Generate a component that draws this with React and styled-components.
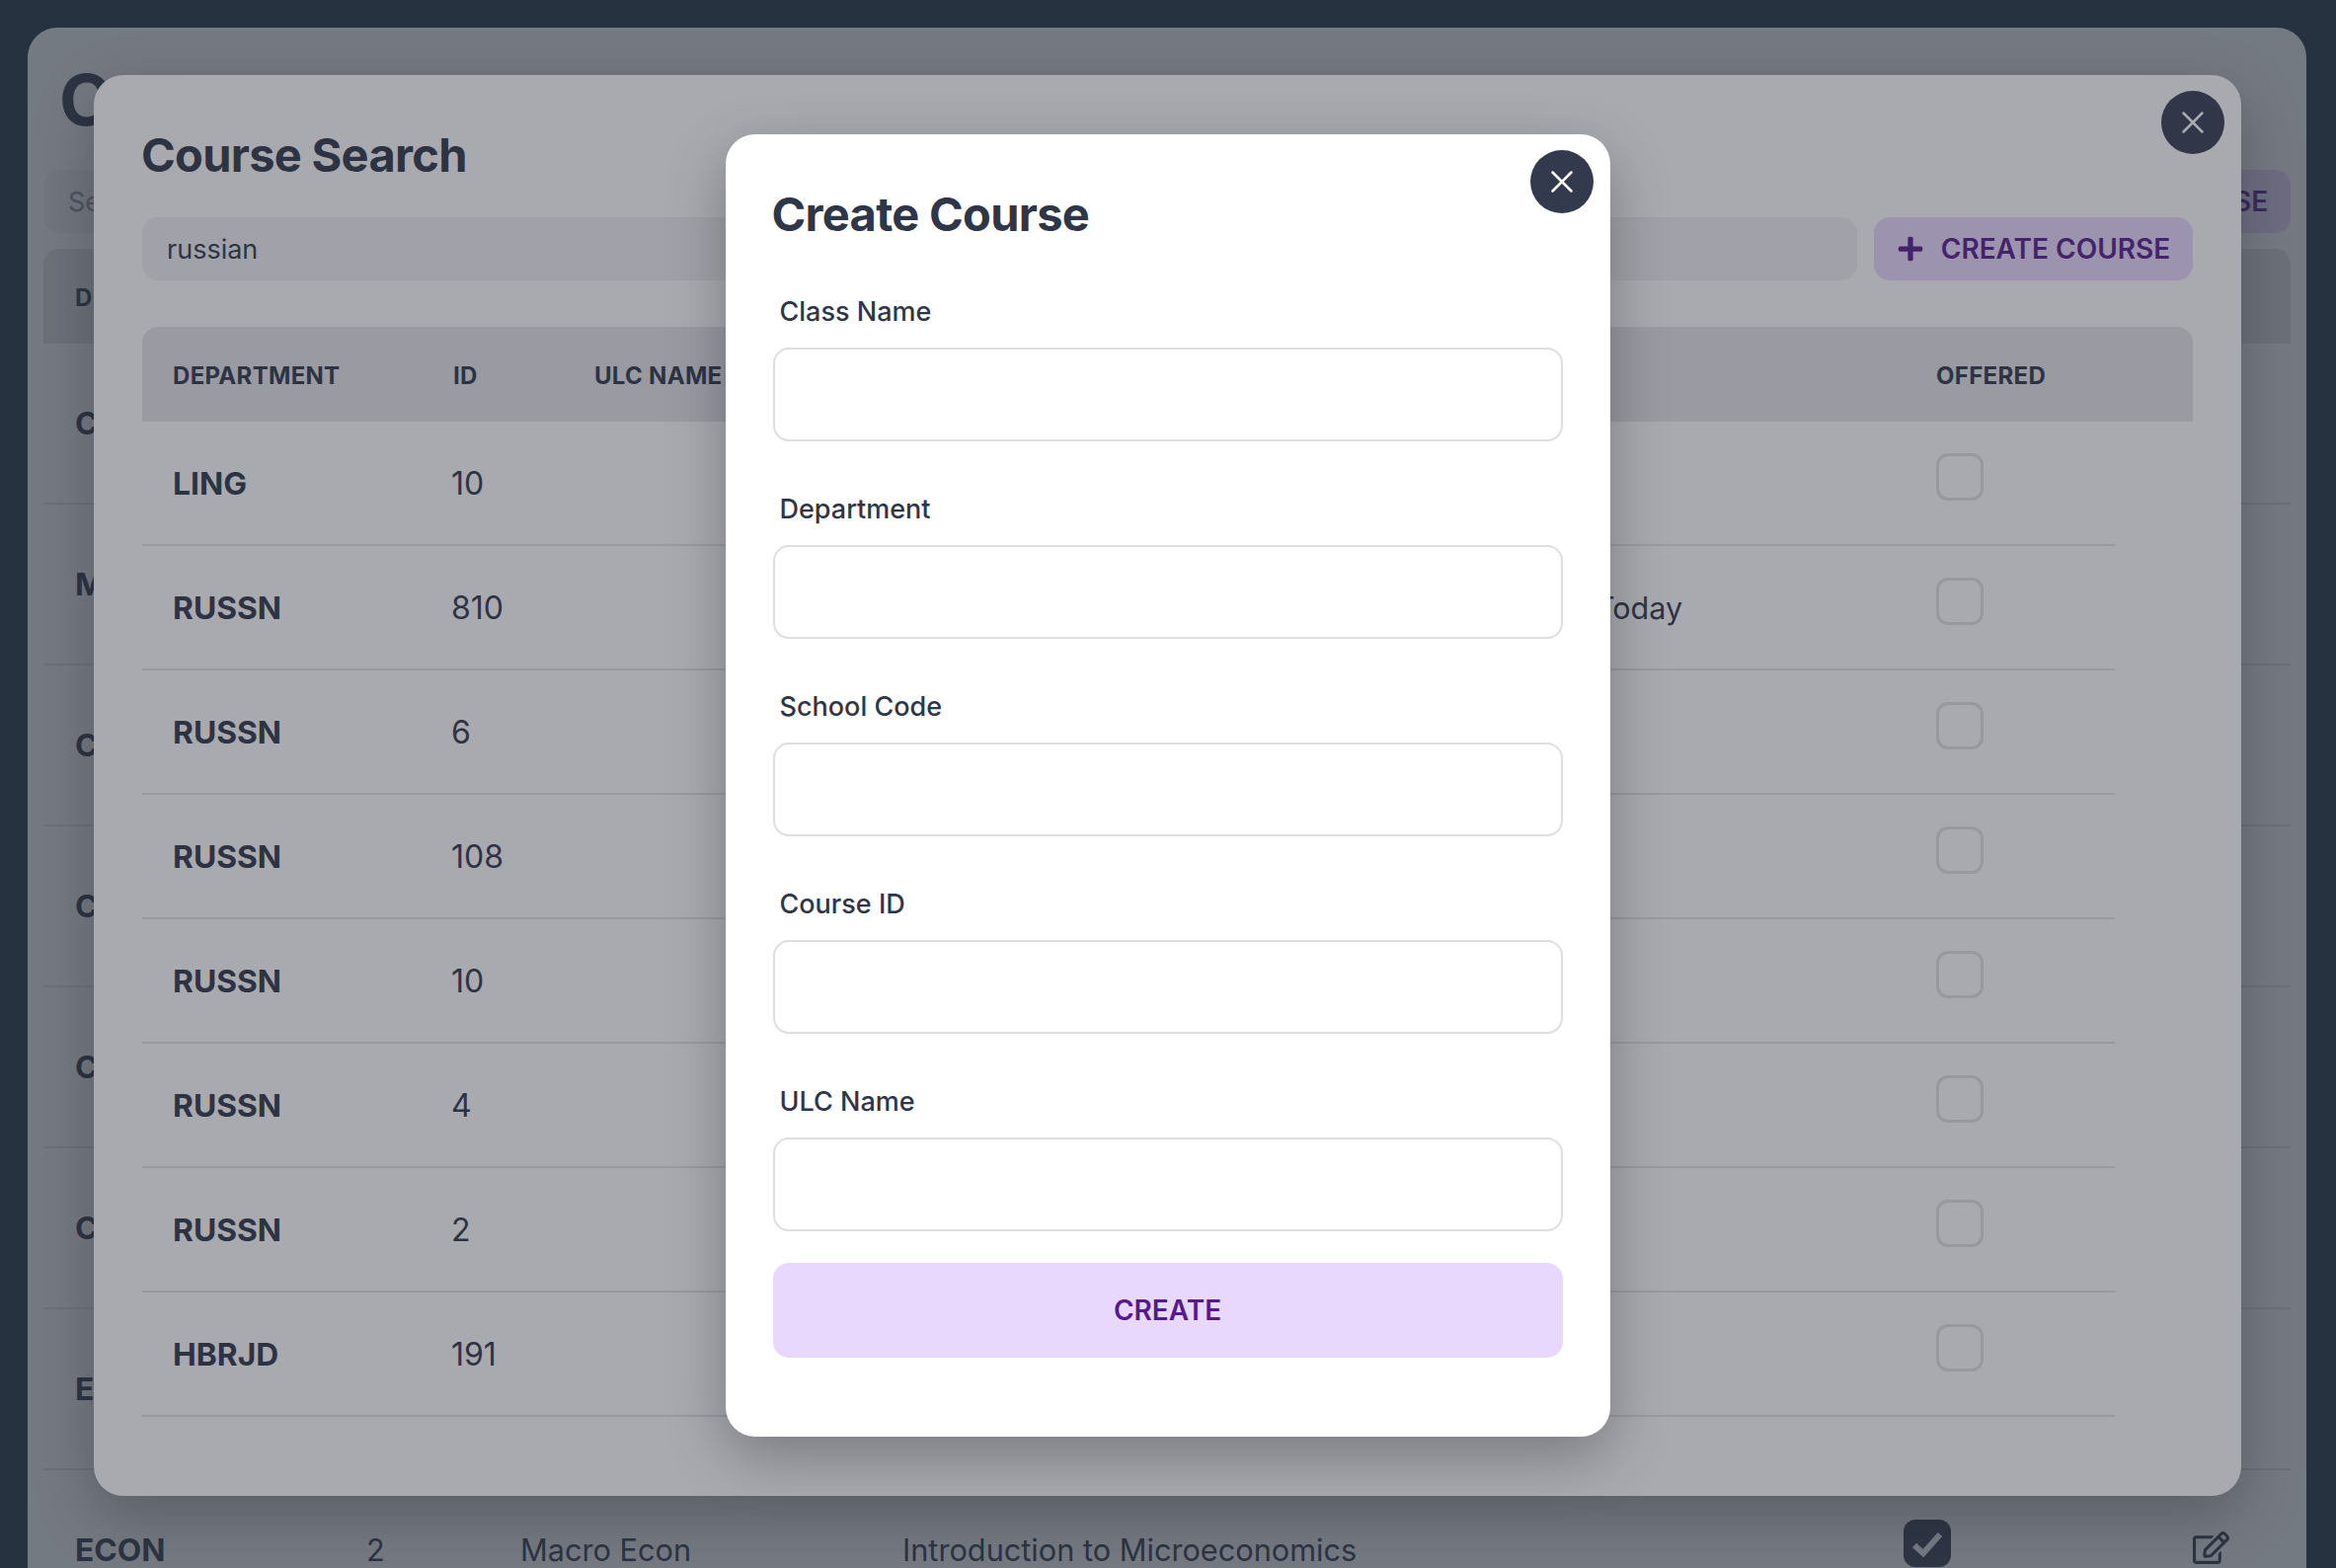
import styled, { createGlobalStyle } from 'styled-components'
import { X } from 'lucide-react'
import { FaPlus, FaRegEdit } from 'react-icons/fa'

const GlobalStyle = createGlobalStyle`
  html, body {
    margin: 0;
    padding: 0;
    background: #1e3041;
  }
  * {
    box-sizing: border-box;
  }
  body, input, button {
    font-family: Inter, "Noto Sans", sans-serif;
  }
`

const Page = styled.div`
  position: relative;
  width: 2366px;
  height: 1588px;
  overflow: hidden;
  padding: 28px 30px 0 28px;
  color: #2f3648;
`

const Panel = styled.main`
  height: 1700px;
  padding: 32px 16px 0;
  background: #fff;
  border-radius: 30px 30px 0 0;
`

const PageTitle = styled.h1`
  margin: 0 0 30px 16px;
  font-size: 72px;
  line-height: 82px;
  font-weight: 700;
`

const Toolbar = styled.div`
  display: flex;
  gap: 17px;
`

const SearchInput = styled.input`
  flex: 1;
  min-width: 0;
  height: 64px;
  padding: 0 25px;
  border: 0;
  border-radius: 16px;
  background: #f1f1f4;
  color: #2f3648;
  font-size: 27px;
  outline: none;

  &::placeholder {
    color: #8b8f99;
    opacity: 1;
  }
`

const CreateButton = styled.button`
  flex: none;
  display: flex;
  align-items: center;
  justify-content: center;
  gap: 17px;
  width: 323px;
  height: 64px;
  padding: 0;
  border: 0;
  border-radius: 16px;
  background: #e9d8fd;
  color: #551a8b;
  font-size: 28px;
  font-weight: 600;
`

const PageHead = styled.div`
  display: grid;
  grid-template-columns: 295px 156px 387px 1014px 1fr;
  align-items: center;
  height: 96px;
  margin-top: 16px;
  padding: 2px 0 0 32px;
  background: #e4e4e7;
  border-radius: 16px 16px 0 0;
  font-size: 24px;
  font-weight: 700;
  letter-spacing: 0.3px;
`

const PageRow = styled.div`
  display: grid;
  grid-template-columns: 295px 156px 387px 1014px 293px 1fr;
  align-items: center;
  height: 163px;
  padding-left: 32px;
  border-bottom: 2px solid #e4e4e6;
  font-size: 30.7px;
`

const Overlay = styled.div`
  position: absolute;
  inset: 0;
  display: flex;
  justify-content: center;
  align-items: flex-start;
  padding: ${(p) => p.$top}px 1px 0 0;
  background: rgba(40, 55, 65, 0.41);
`

const FormOverlay = styled(Overlay)`
  background: rgba(46, 48, 62, 0.41);
`

const Modal = styled.section`
  position: relative;
  width: ${(p) => p.$width}px;
  background: #fff;
  border-radius: 30px;
  box-shadow: 0 20px 60px rgba(0, 0, 0, 0.28);
`

const SearchModal = styled(Modal)`
  padding: 52px 49px 80px;
`

const FormModal = styled(Modal)`
  padding: 52px 48px 80px;
`

const CloseButton = styled.button`
  position: absolute;
  top: 16px;
  right: 17px;
  display: flex;
  align-items: center;
  justify-content: center;
  width: 64px;
  height: 64px;
  padding: 0;
  border: 0;
  border-radius: 50%;
  background: #333a4e;
  color: #fff;
`

const ModalTitle = styled.h2`
  margin: 0 0 34px -1px;
  font-size: 47px;
  line-height: 58px;
  font-weight: 700;
  letter-spacing: -0.7px;
`

const FormTitle = styled(ModalTitle)`
  margin-bottom: 49px;
`

const SearchHead = styled.div`
  display: grid;
  grid-template-columns: 284px 143px 1359px 1fr;
  align-items: center;
  height: 96px;
  margin-top: 47px;
  padding: 2px 0 0 31px;
  background: #e4e4e7;
  border-radius: 16px 16px 0 0;
  font-size: 24px;
  font-weight: 700;
  letter-spacing: 0.3px;
`

const SearchRow = styled.div`
  display: grid;
  grid-template-columns: 284px 143px 1014px 344px 1fr;
  align-items: center;
  width: 1998px;
  height: 126px;
  padding: 1px 0 0 31px;
  border-bottom: 2px solid #e4e4e6;
  font-size: 30.5px;
`

const Dept = styled.span`
  font-size: 31.8px;
  font-weight: 700;
`

const CourseId = styled.span`
  margin-left: -2px;
  font-size: 32px;
`

const Checkbox = styled.span`
  display: block;
  width: 48px;
  height: 48px;
  margin: 0 0 13px 1px;
  border: 3px solid #e0e0e4;
  border-radius: 12px;
`

const CheckedBox = styled.span`
  display: block;
  width: 48px;
  height: 48px;
  margin-bottom: 14px;
  border-radius: 12px;
  background: #333a4e;
  color: #fff;

  svg {
    display: block;
  }
`

const EditIcon = styled(FaRegEdit)`
  margin-bottom: 4px;
  color: #2f3648;
`

const Field = styled.label`
  display: block;
  margin-bottom: 48px;
`

const FieldLabel = styled.span`
  display: block;
  height: 40px;
  margin-bottom: 17px;
  padding: 1px 0 0 7px;
  font-size: 27px;
  line-height: 40px;
  font-weight: 500;
`

const FieldInput = styled.input`
  display: block;
  width: 100%;
  height: 95px;
  padding: 0 24px;
  border: 2.5px solid #dedee0;
  border-radius: 16px;
  background: #fff;
  font-size: 28px;
  outline: none;
`

const SubmitButton = styled.button`
  display: block;
  width: 100%;
  height: 96px;
  margin-top: -16px;
  border: 0;
  border-radius: 16px;
  background: #e9d8fd;
  color: #551a8b;
  font-size: 28px;
  font-weight: 600;
`

const pageRows = ['CS', 'MATH', 'CHEM', 'CS', 'CS', 'CS', 'ECON']

const searchRows = [
  { dept: 'LING', id: '10' },
  { dept: 'RUSSN', id: '810', note: 'Today' },
  { dept: 'RUSSN', id: '6' },
  { dept: 'RUSSN', id: '108' },
  { dept: 'RUSSN', id: '10' },
  { dept: 'RUSSN', id: '4' },
  { dept: 'RUSSN', id: '2' },
  { dept: 'HBRJD', id: '191' },
]

const fields = ['Class Name', 'Department', 'School Code', 'Course ID', 'ULC Name']

const App = () => {
  return (
    <Page>
      <GlobalStyle />
      <Panel>
        <PageTitle>Courses</PageTitle>
        <Toolbar>
          <SearchInput placeholder="Search" readOnly />
          <CreateButton>
            <FaPlus size={28} /> CREATE COURSE
          </CreateButton>
        </Toolbar>
        <PageHead>
          <span>DEPARTMENT</span>
        </PageHead>
        {pageRows.map((dept, i) => (
          <PageRow key={i}>
            <Dept>{dept}</Dept>
          </PageRow>
        ))}
        <PageRow>
          <Dept>ECON</Dept>
          <span>2</span>
          <span>Macro Econ</span>
          <span>Introduction to Microeconomics</span>
          <CheckedBox>
            <svg width="48" height="48" viewBox="0 0 48 48" fill="none">
              <polyline points="11,26 20,34 37,15" stroke="currentColor" strokeWidth="6" />
            </svg>
          </CheckedBox>
          <EditIcon size={37} />
        </PageRow>
      </Panel>

      <Overlay $top={76}>
        <SearchModal $width={2175}>
          <CloseButton>
            <X size={38} strokeWidth={1.6} />
          </CloseButton>
          <ModalTitle>Course Search</ModalTitle>
          <Toolbar>
            <SearchInput defaultValue="russian" readOnly />
            <CreateButton>
              <FaPlus size={28} /> CREATE COURSE
            </CreateButton>
          </Toolbar>
          <SearchHead>
            <span>DEPARTMENT</span>
            <span>ID</span>
            <span>ULC NAME</span>
            <span>OFFERED</span>
          </SearchHead>
          {searchRows.map((row, i) => (
            <SearchRow key={i}>
              <Dept>{row.dept}</Dept>
              <CourseId>{row.id}</CourseId>
              <span />
              <span>{row.note}</span>
              <Checkbox />
            </SearchRow>
          ))}
        </SearchModal>
      </Overlay>

      <FormOverlay $top={136}>
        <FormModal $width={896}>
          <CloseButton>
            <X size={38} strokeWidth={1.6} />
          </CloseButton>
          <FormTitle>Create Course</FormTitle>
          {fields.map((name) => (
            <Field key={name}>
              <FieldLabel>{name}</FieldLabel>
              <FieldInput />
            </Field>
          ))}
          <SubmitButton>CREATE</SubmitButton>
        </FormModal>
      </FormOverlay>
    </Page>
  )
}

export default App
